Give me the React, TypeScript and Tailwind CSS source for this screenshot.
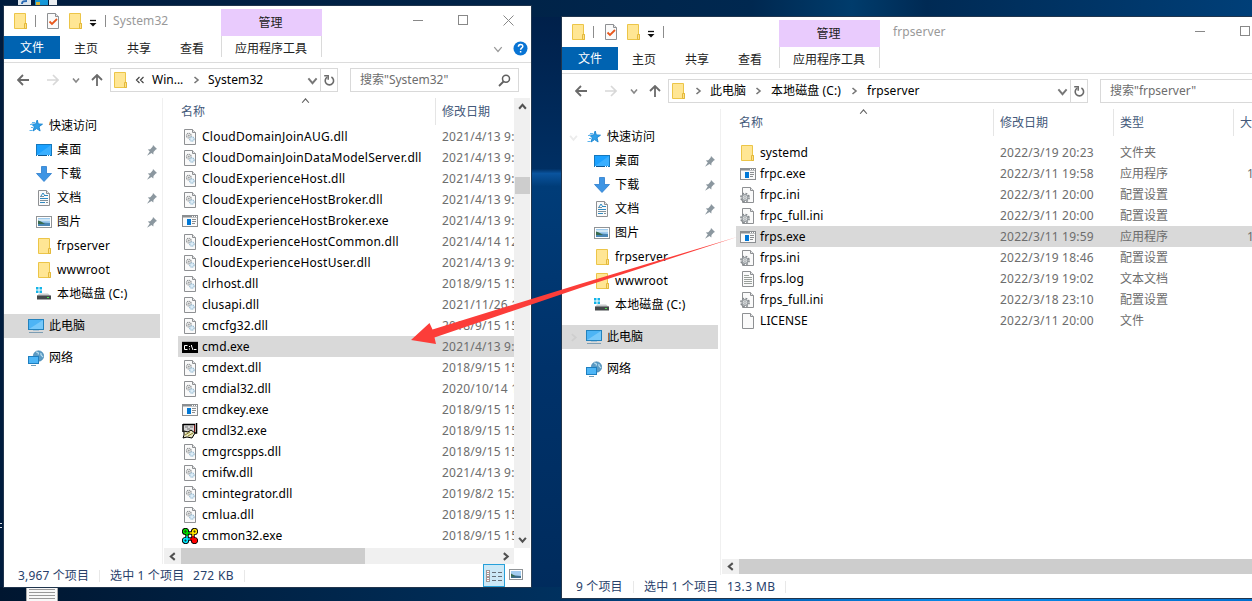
import React from 'react';

type IconKind = 'dll' | 'exe' | 'cmd' | 'dl32' | 'mon' | 'folder' | 'ini' | 'log' | 'file';

interface FileRow {
  name: string;
  date: string;
  icon: IconKind;
  type?: string;
  size?: string;
  selected?: boolean;
}

const SYSTEM_FILES: FileRow[] = [
  { name: 'CloudDomainJoinAUG.dll', date: '2021/4/13 9:', icon: 'dll' },
  { name: 'CloudDomainJoinDataModelServer.dll', date: '2021/4/13 9:', icon: 'dll' },
  { name: 'CloudExperienceHost.dll', date: '2021/4/13 9:', icon: 'dll' },
  { name: 'CloudExperienceHostBroker.dll', date: '2021/4/13 9:', icon: 'dll' },
  { name: 'CloudExperienceHostBroker.exe', date: '2021/4/13 9:', icon: 'exe' },
  { name: 'CloudExperienceHostCommon.dll', date: '2021/4/14 12', icon: 'dll' },
  { name: 'CloudExperienceHostUser.dll', date: '2021/4/13 9:', icon: 'dll' },
  { name: 'clrhost.dll', date: '2018/9/15 15', icon: 'dll' },
  { name: 'clusapi.dll', date: '2021/11/26 1', icon: 'dll' },
  { name: 'cmcfg32.dll', date: '2018/9/15 15', icon: 'dll' },
  { name: 'cmd.exe', date: '2021/4/13 9:', icon: 'cmd', selected: true },
  { name: 'cmdext.dll', date: '2018/9/15 15', icon: 'dll' },
  { name: 'cmdial32.dll', date: '2020/10/14 1', icon: 'dll' },
  { name: 'cmdkey.exe', date: '2018/9/15 15', icon: 'exe' },
  { name: 'cmdl32.exe', date: '2018/9/15 15', icon: 'dl32' },
  { name: 'cmgrcspps.dll', date: '2018/9/15 15', icon: 'dll' },
  { name: 'cmifw.dll', date: '2021/4/13 9:', icon: 'dll' },
  { name: 'cmintegrator.dll', date: '2019/8/2 15:', icon: 'dll' },
  { name: 'cmlua.dll', date: '2018/9/15 15', icon: 'dll' },
  { name: 'cmmon32.exe', date: '2018/9/15 15', icon: 'mon' },
];

const FRP_FILES: FileRow[] = [
  { name: 'systemd', date: '2022/3/19 20:23', icon: 'folder', type: '文件夹' },
  { name: 'frpc.exe', date: '2022/3/11 19:58', icon: 'exe', type: '应用程序', size: '1' },
  { name: 'frpc.ini', date: '2022/3/11 20:00', icon: 'ini', type: '配置设置' },
  { name: 'frpc_full.ini', date: '2022/3/11 20:00', icon: 'ini', type: '配置设置' },
  { name: 'frps.exe', date: '2022/3/11 19:59', icon: 'exe', type: '应用程序', size: '1', selected: true },
  { name: 'frps.ini', date: '2022/3/19 18:46', icon: 'ini', type: '配置设置' },
  { name: 'frps.log', date: '2022/3/19 19:02', icon: 'log', type: '文本文档' },
  { name: 'frps_full.ini', date: '2022/3/18 23:10', icon: 'ini', type: '配置设置' },
  { name: 'LICENSE', date: '2022/3/11 20:00', icon: 'file', type: '文件' },
];

const Svg = ({ children, w = 16, h = 16 }: { children: React.ReactNode; w?: number; h?: number }) => (
  <svg width={w} height={h} viewBox={`0 0 ${w} ${h}`} fill="none" className="block shrink-0">
    {children}
  </svg>
);

const FolderIcon = () => (
  <Svg>
    <path d="M1.5.5h11v10h1v5h-12z" fill="#ffe694" stroke="#ecc548" />
    <path d="M11.5 15.5v-5h2v5z" fill="#ffe089" stroke="#e3b93b" />
  </Svg>
);

const PageOutline = () => (
  <>
    <path d="M2.5.5h8l3 3v12h-11z" fill="#fafafa" stroke="#8e9093" />
    <path d="M10.5.5v3h3" fill="#e4e6e8" stroke="#8e9093" />
  </>
);

const FileIcon = ({ kind }: { kind: IconKind }) => {
  switch (kind) {
    case 'folder':
      return <FolderIcon />;
    case 'exe':
      return (
        <Svg>
          <rect x=".5" y="2.5" width="15" height="11" fill="#fafafa" stroke="#8b8e91" />
          <path d="M0 3h16v1.500H0z" fill="#8b8e91" />
          <path d="M10 3.5h1M12 3.5h1M14 3.5h1" stroke="#fff" />
          <path d="M5 6h4v6H5z" fill="#0078d7" />
          <path d="M10 6.5h4M10 8.5h4M10 10.5h3" stroke="#8a8d90" />
        </Svg>
      );
    case 'cmd':
      return (
        <Svg>
          <rect x=".5" y="2.5" width="15" height="11" fill="#000" stroke="#000" />
          <path d="M0 2.5h16" stroke="#b4b4b4" />
          <path d="M5.5 6.500H2.500v4h3M7.500 7v1M7.500 9.500v1M9.500 6v1l1.500 4M12 10.500h2.500" stroke="#fff" />
        </Svg>
      );
    case 'dl32':
      return (
        <Svg>
          <path d="M1 1h13v9H1z" fill="#d6d6d6" />
          <path d="M1 1.5h12M1 1v8M14.5 0v10h-4" stroke="#000" strokeWidth="1.5" />
          <path d="M12.5 2v7" stroke="#7a1010" />
          <path d="M3 4h3M8 4h3M5 6h3" stroke="#777" />
          <path d="M2 8l4 1 3-2 4 3-3 5-5-1-4 1 1-3z" fill="#e9e6c0" stroke="#000" />
          <path d="M3 12l5-3M6 13l5-3" stroke="#8a812c" />
        </Svg>
      );
    case 'mon':
      return (
        <Svg>
          <path d="M5 5h6v6H5z" stroke="#000" strokeWidth="3.5" />
          <g stroke="#000" strokeWidth="4">
            <circle cx="3.5" cy="3.5" r="1.6" />
            <circle cx="12.5" cy="3.5" r="1.6" />
            <circle cx="3.5" cy="12.5" r="1.6" />
            <circle cx="12.5" cy="12.5" r="1.6" />
          </g>
          <path d="M5 8V5h3" stroke="#00d800" strokeWidth="1.6" />
          <circle cx="3.5" cy="3.5" r="1.8" stroke="#00e000" strokeWidth="1.7" />
          <path d="M8 5h3v3" stroke="#ffe000" strokeWidth="1.6" />
          <circle cx="12.5" cy="3.5" r="1.8" stroke="#ffe600" strokeWidth="1.7" />
          <path d="M5 8v3h3" stroke="#00d8f0" strokeWidth="1.6" />
          <circle cx="3.5" cy="12.5" r="1.8" stroke="#00e8ff" strokeWidth="1.7" />
          <path d="M8 11h3V8" stroke="#f00" strokeWidth="1.6" />
          <circle cx="12.5" cy="12.5" r="1.8" fill="#f00" stroke="#f00" strokeWidth="1.7" />
        </Svg>
      );
    case 'ini':
      return (
        <Svg>
          <PageOutline />
          <circle cx="5" cy="10.5" r="4.1" stroke="#84898d" strokeWidth="1.6" strokeDasharray="1.8 1.42" />
          <circle cx="5" cy="10.5" r="2.9" fill="#dfe2e4" stroke="#969b9f" strokeWidth="1.2" />
          <circle cx="5" cy="10.5" r="1" fill="#fff" stroke="#8b9094" strokeWidth=".7" />
        </Svg>
      );
    case 'log':
      return (
        <Svg>
          <PageOutline />
          <path d="M4 4.5h5M4 6.5h8M4 8.5h8M4 10.5h8M4 12.5h8" stroke="#9aa09b" />
        </Svg>
      );
    case 'file':
      return (
        <Svg>
          <PageOutline />
        </Svg>
      );
    default:
      return (
        <Svg>
          <PageOutline />
          <circle cx="6.8" cy="6.6" r="2.4" fill="#e4e4e4" stroke="#8d9193" strokeWidth="1.1" strokeDasharray="1.1 .6" />
          <circle cx="6.8" cy="6.6" r=".9" fill="#9b9fa1" />
          <circle cx="9.900" cy="10" r="2.200" fill="#dcecf7" stroke="#8fb4cc" strokeWidth="1.1" strokeDasharray="1.1 .6" />
        </Svg>
      );
  }
};

const NavIcon = ({ kind }: { kind: string }) => (
  <Svg>
    {kind === 'star' && (
      <>
        <path d="M8.200 2l1.100 3.900 4.200.3-3.500 2.500 1.100 4.300-3.500-2.400L4 13l1.300-4.300L2.600 6.200l4.100-.3z" fill="#2f9fe8" stroke="#1683d0" strokeWidth=".9" />
        <path d="M3 4.500h3M1 6.500h3M2 9.500h2M.5 12.500h3" stroke="#5db4ee" strokeWidth="1" />
      </>
    )}
    {kind === 'desktop' && (
      <>
        <rect x=".5" y="2.5" width="15" height="11" fill="#1ba1ff" stroke="#1478bd" />
        <path d="M1 13L15 3v10z" fill="#3aafff" />
        <path d="M1 13.5h10" stroke="#0d5793" />
        <path d="M1 13.5h1M11 13.5h1M13 13.5h1" stroke="#fff" />
      </>
    )}
    {kind === 'download' && <path d="M5.5.5h5v7h5L8 15.5.5 7.5h5z" fill="#3e95e4" stroke="#2b7ccd" strokeWidth=".8" />}
    {kind === 'document' && (
      <>
        <PageOutline />
        <path d="M5 6l2-3 2 3M8 5.5h4M4 8.5h8M4 12.5h5" stroke="#2f8ac2" />
        <path d="M4 6.5h4M4 10.5h8M10 12.5h2" stroke="#809099" />
      </>
    )}
    {kind === 'picture' && (
      <>
        <rect x=".5" y="2.5" width="15" height="11" fill="#fff" stroke="#909497" />
        <path d="M2 4h12v8H2z" fill="#9fcbed" />
        <path d="M2 5h12v2H2z" fill="#cfe6f5" />
        <path d="M2 8l4 .5L14 9v3H2z" fill="#4a86b4" />
        <path d="M2 6.5l3 1 4 2.5H2z" fill="#386b4e" />
      </>
    )}
    {kind === 'disk' && (
      <>
        <path d="M0 1h2.500v2.500H0zM3.500 1H6v2.500H3.500zM0 4.500h2.500V7H0zM3.500 4.500H6V7H3.500z" fill="#12b4e8" />
        <path d="M3 7.500h9l3 2.500H1z" fill="#c9cccd" />
        <path d="M1 9.500h14v4H1z" fill="#44494b" />
        <path d="M11 11.500h2" stroke="#4ee44e" />
      </>
    )}
    {kind === 'pc' && (
      <>
        <rect x=".5" y="1.5" width="15" height="10" fill="#4db4f5" stroke="#2382bd" />
        <path d="M1 11L15 2v9z" fill="#76c8fa" />
        <path d="M5 12.5h6" stroke="#a9c4d5" />
        <path d="M1 14.5h14" stroke="#7c9db3" />
      </>
    )}
    {kind === 'network' && (
      <>
        <circle cx="10.5" cy="6" r="5.2" fill="#5b9bc4" stroke="#3a7dab" strokeWidth=".6" />
        <path d="M8 2c2 0 3 1 2 2.500M13 3c-1 2 1 3 2 4" stroke="#bde0f1" strokeWidth="1.200" />
        <rect x=".5" y="6.500" width="10" height="7" fill="#4db6f7" stroke="#1e7fc0" />
        <path d="M3 15.5h5" stroke="#6f9cb8" />
      </>
    )}
    {kind === 'folder' && (
      <>
        <path d="M2.5.5h11v10h1v5h-12z" fill="#ffe694" stroke="#ecc548" />
        <path d="M12.5 15.5v-5h2v5z" fill="#ffe089" stroke="#e3b93b" />
      </>
    )}
  </Svg>
);

const PinIcon = () => (
  <Svg w={10} h={11}>
    <path d="M6 0l4 4-1.2.6L6.500 7l-.2 2.500L4.500 8 0 10.800 2.800 6.500.8 4.600 3.300 4.200 5.700 1.500z" fill="#8b979f" />
  </Svg>
);

const Chevron = ({ dir, color = '#606060', size = 8, width = 1.6 }: { dir: 'up' | 'down' | 'left' | 'right'; color?: string; size?: number; width?: number }) => {
  const paths = { up: 'M1 6l3-3.500L7 6', down: 'M1 2.500L4 6l3-3.500', left: 'M6 1L2.500 4 6 7', right: 'M2.500 1L6 4 2.500 7' };
  return (
    <svg width={size} height={size} viewBox="0 0 8 8" fill="none" className="block shrink-0">
      <path d={paths[dir]} stroke={color} strokeWidth={width} />
    </svg>
  );
};

const NAV_ITEMS = [
  { label: '桌面', icon: 'desktop', pinned: true },
  { label: '下载', icon: 'download', pinned: true },
  { label: '文档', icon: 'document', pinned: true },
  { label: '图片', icon: 'picture', pinned: true },
  { label: 'frpserver', icon: 'folder' },
  { label: 'wwwroot', icon: 'folder' },
  { label: '本地磁盘 (C:)', icon: 'disk' },
];

const NavPane = ({ expanders }: { expanders?: boolean }) => (
  <nav className="w-[159px] shrink-0 border-r border-[#f0f0f0] pt-4 text-black">
    <div className="flex h-6 items-center">
      <span className="flex w-[25px] pl-[7px]">{expanders && <Chevron dir="down" color="#ececec" size={9} />}</span>
      <NavIcon kind="star" />
      <span className="ml-1">快速访问</span>
    </div>
    {NAV_ITEMS.map((item) => (
      <div key={item.label} className="flex h-6 items-center pl-8">
        <NavIcon kind={item.icon} />
        <span className="ml-[5px] flex-1 tracking-[0.15px]">{item.label}</span>
        {item.pinned && (
          <span className="mr-[5px]">
            <PinIcon />
          </span>
        )}
      </div>
    ))}
    <div className="mt-2 mr-0.5 flex h-6 items-center bg-[#d9d9d9]">
      <span className="flex w-6 pl-[7px]">{expanders && <Chevron dir="right" color="#cecece" size={9} />}</span>
      <NavIcon kind="pc" />
      <span className="ml-[5px]">此电脑</span>
    </div>
    <div className="mt-2 flex h-6 items-center pl-6">
      <NavIcon kind="network" />
      <span className="ml-[5px]">网络</span>
    </div>
  </nav>
);

const TitleBar = ({ title, titleAfter }: { title: string; titleAfter?: boolean }) => (
  <header className="flex h-[30px] pt-[3px]">
    <div className="flex w-[217px] items-center pb-[3px] pl-[9px]">
      <FolderIcon />
      <span className="ml-[6px] h-3 w-px bg-[#8c8c8c]" />
      <span className="ml-[9px]">
        <Svg>
          <PageOutline />
          <path d="M4.500 8.500l2.500 2.500L12 6" stroke="#e8571c" strokeWidth="1.800" />
        </Svg>
      </span>
      <span className="ml-[7px]"><FolderIcon /></span>
      <span className="ml-[5px] mt-[3px]">
        <Svg w={8} h={8}>
          <path d="M1 1.500h6" stroke="#111" strokeWidth="1.300" />
          <path d="M.5 4h7L4 7.500z" fill="#111" />
        </Svg>
      </span>
      <span className="ml-2 h-3 w-px bg-[#8c8c8c]" />
      {!titleAfter && <span className="ml-[7px] tracking-[0.1px] text-[#999]">{title}</span>}
    </div>
    <div className="flex h-[27px] w-[101px] items-center justify-center bg-[#e9cbfd] pr-0.5 text-[#222]">管理</div>
    {titleAfter && <span className="ml-[13px] flex h-6 items-center tracking-[0.1px] text-[#999]">{title}</span>}
    <div className="ml-auto flex h-[22px] items-center gap-[35px] pr-[17px]">
      <span className="h-px w-[10px] bg-[#888]" />
      <span className="h-[10px] w-[10px] border border-[#888]" />
      <Svg w={11} h={11}>
        <path d="M.5.500l10 10M10.500.500l-10 10" stroke="#888" />
      </Svg>
    </div>
  </header>
);

const RibbonTabs = () => (
  <div className="flex h-[27px] items-start border-b border-[#dcdcdc] text-[#222]">
    <div className="flex h-[23px] w-14 items-center justify-center bg-[#0063b1] pt-px text-white">文件</div>
    <div className="flex h-[26px] w-[53px] items-center justify-center pr-px">主页</div>
    <div className="flex h-[26px] w-[53px] items-center justify-center pr-px">共享</div>
    <div className="flex h-[26px] w-[53px] items-center justify-center pr-px">查看</div>
    <div className="ml-[2px] flex h-[21px] w-[101px] items-center justify-center border-x border-[#dadada] pt-[5px] pr-px">应用程序工具</div>
    <div className="ml-auto flex h-[25px] items-center gap-[10px] pr-[3px]">
      <Chevron dir="down" size={10} color="#999" width={1} />
      <Svg w={15} h={15}>
        <circle cx="7.500" cy="7.500" r="7" fill="#0874d4" />
        <path d="M5.400 5.800c0-3 4.400-3 4.400-.4 0 1.500-2.200 1.500-2.200 3.300M7.600 10v1.600" stroke="#fff" strokeWidth="1.500" />
      </Svg>
    </div>
  </div>
);

const AddressBar = ({ children, search, boxClass, searchClass }: { children: React.ReactNode; search: string; boxClass: string; searchClass: string }) => (
  <div className="flex h-[29px] items-end">
    <div className="flex h-6 w-[106px] items-center pl-[13px]">
      <Svg w={12} h={12}>
        <path d="M12 6H1M6 1L1 6l5 5" stroke="#6a6a6a" strokeWidth="1.800" />
      </Svg>
      <span className="ml-[18px]">
        <Svg w={12} h={12}>
          <path d="M0 6h11M6 1l5 5-5 5" stroke="#d8d8d8" strokeWidth="1.600" />
        </Svg>
      </span>
      <span className="ml-[13px]"><Chevron dir="down" color="#888" size={8} /></span>
      <span className="ml-[11px]">
        <Svg w={12} h={12}>
          <path d="M6 12V1M1 6l5-5 5 5" stroke="#6a6a6a" strokeWidth="1.800" />
        </Svg>
      </span>
    </div>
    <div className={`flex h-6 shrink-0 items-center border border-[#d9d9d9] pl-[2px] text-black ${boxClass}`}>
      <FolderIcon />
      {children}
      <span className="ml-auto mr-[2px]"><Chevron dir="down" color="#777" size={11} width={1.400} /></span>
      <span className="flex h-full w-[17px] items-center justify-center border-l border-[#d9d9d9]">
        <Svg w={12} h={12}>
          <path d="M4.200 3.100A4.200 4.200 0 1 0 8.400 3" stroke="#6a6a6a" strokeWidth="1.600" />
          <path d="M1.200 1.800h4v4" stroke="#6a6a6a" strokeWidth="1.500" />
        </Svg>
      </span>
    </div>
    <div className={`ml-3 flex h-6 shrink-0 items-center border border-[#d9d9d9] pl-[9px] text-[#6d6d6d] ${searchClass}`}>
      {search}
      <span className="ml-auto mr-[7px]">
        <Svg w={13} h={13}>
          <circle cx="8" cy="4.800" r="3.500" stroke="#606060" strokeWidth="1.500" />
          <path d="M5.500 7.500L1 12" stroke="#606060" strokeWidth="1.800" />
        </Svg>
      </span>
    </div>
  </div>
);

const FileList = ({ files, dateWidth }: { files: FileRow[]; dateWidth: string }) => (
  <div className="ml-[14px] text-[#6d6d6d]">
    {files.map((file) => (
      <div key={file.name} className={`flex h-[21px] items-center whitespace-nowrap ${file.selected ? 'bg-[#d9d9d9]' : ''}`}>
        <span className="ml-1"><FileIcon kind={file.icon} /></span>
        <span className={`ml-1 w-[240px] shrink-0 text-black ${file.name.length > 20 ? 'tracking-[0.25px]' : 'tracking-[0.1px]'}`}>{file.name}</span>
        <span className={`shrink-0 overflow-hidden tracking-[0.2px] ${dateWidth}`}>{file.date}</span>
        {file.type && <span className="w-[120px] shrink-0">{file.type}</span>}
        {file.size && <span className="ml-[7px]">{file.size}</span>}
      </div>
    ))}
  </div>
);

const SystemWindow = () => (
  <section className="absolute top-[6px] left-1 flex h-[581px] w-[527px] flex-col overflow-hidden bg-white shadow-[0_0_0_1px_#20354d]">
    <TitleBar title="System32" />
    <RibbonTabs />
    <AddressBar search={'搜索"System32"'} boxClass="w-[228px]" searchClass="w-[169px]">
      <span className="ml-[6px] flex w-[17px]">
        <Svg w={10} h={8}>
          <path d="M4.500 1l-3 3 3 3M8.500 1l-3 3 3 3" stroke="#444" strokeWidth="1.200" />
        </Svg>
      </span>
      <span className="w-10">Win...</span>
      <Chevron dir="right" color="#777" />
      <span className="ml-2 tracking-[0.1px]">System32</span>
    </AddressBar>
    <div className="flex h-[472px] pt-[6px]">
      <NavPane />
      <div className="flex min-w-0 flex-1 flex-col pl-px">
        <div className="flex h-[450px]">
          <div className="w-[350px] overflow-hidden">
            <div className="flex h-7 text-[#44597a]">
              <div className="relative flex h-[27px] w-[272px] items-center border-r border-[#e5e5e5] pl-[17px]">
                名称
                <span className="absolute -top-[2px] left-[137px]"><Chevron dir="up" size={9} width={1} /></span>
              </div>
              <div className="flex h-[27px] items-center pl-[6px]">修改日期</div>
            </div>
            <FileList files={SYSTEM_FILES} dateWidth="w-[72px]" />
          </div>
          <div className="flex w-4 flex-col items-center bg-[#f0f0f0] pt-1 pb-1">
            <Chevron dir="up" color="#505050" size={9} width={1.800} />
            <div className="mt-[66px] h-[17px] w-[15px] bg-[#cdcdcd]" />
            <span className="mt-auto"><Chevron dir="down" color="#505050" size={9} width={1.800} /></span>
          </div>
        </div>
        <div className="flex h-4 w-[350px] items-center bg-[#f0f0f0] pl-1">
          <Chevron dir="left" color="#505050" size={9} width={1.800} />
          <div className="ml-1 h-full w-[184px] bg-[#cdcdcd]" />
          <span className="mr-1 ml-auto"><Chevron dir="right" color="#505050" size={9} width={1.800} /></span>
        </div>
      </div>
    </div>
    <footer className="flex flex-1 items-center pl-[14px] tracking-[0.15px] text-[#28416b]">
      <span className="w-[81px]">3,967 个项目</span>
      <span className="h-3 w-px bg-[#e8e8e8]" />
      <span className="ml-[10px] w-[83px]">选中 1 个项目</span>
      <span className="w-[51px] tracking-[0.3px]">272 KB</span>
      <span className="h-3 w-px bg-[#e8e8e8]" />
      <span className="ml-auto flex h-full w-[22px] items-center justify-center border border-[#26a0da] bg-[#cce8f6]">
        <Svg>
          <rect x=".5" y="2.500" width="3" height="11" fill="#fff" stroke="#999" />
          <path d="M1 6.500h3M1 9.500h3" stroke="#999" />
          <path d="M2 4v1M2 8v1M2 11v1" stroke="#a02020" />
          <path d="M6 4.500h4M12 4.500h4M6 8.500h4M12 8.500h4M6 12.500h4M12 12.500h4" stroke="#666f78" />
        </Svg>
      </span>
      <span className="mr-[7px] mb-[2px] ml-[3px]">
        <svg width="14" height="14" viewBox="0 0 14 14" className="mx-px block">
          <rect x=".5" y="1.500" width="13" height="10" fill="#fff" stroke="#909497" />
          <path d="M2 3h10v7H2z" fill="#a4cdf0" />
          <path d="M2 7l4 .5 6 .5v2H2z" fill="#3e6f8e" />
          <path d="M2 5.500L7 8.500H2z" fill="#3a6d50" />
        </svg>
      </span>
    </footer>
  </section>
);

const FrpWindow = () => (
  <section className="absolute top-[17px] left-[562px] flex h-[581px] w-[751px] flex-col overflow-hidden bg-white shadow-[0_0_0_1px_#20354d]">
    <TitleBar title="frpserver" titleAfter />
    <RibbonTabs />
    <AddressBar search={'搜索"frpserver"'} boxClass="w-[420px]" searchClass="w-[205px]">
      <span className="ml-[7px]"><Chevron dir="right" color="#777" /></span>
      <span className="ml-2 w-11">此电脑</span>
      <Chevron dir="right" color="#777" />
      <span className="ml-[9px] w-[79px] tracking-[0.1px]">本地磁盘 (C:)</span>
      <Chevron dir="right" color="#777" />
      <span className="ml-[9px] tracking-[0.1px]">frpserver</span>
    </AddressBar>
    <div className="flex h-[472px] pt-[6px]">
      <NavPane expanders />
      <div className="flex min-w-0 flex-1 flex-col pl-px">
        <div className="h-[450px]">
          <div className="mb-[6px] flex h-[27px] text-[#44597a]">
            <div className="relative flex w-[272px] items-center border-r border-[#e5e5e5] pl-[17px]">
              名称
              <span className="absolute -top-[2px] left-[137px]"><Chevron dir="up" size={9} width={1} /></span>
            </div>
            <div className="flex w-[120px] items-center border-r border-[#e5e5e5] pl-[6px]">修改日期</div>
            <div className="flex w-[120px] items-center border-r border-[#e5e5e5] pl-[6px]">类型</div>
            <div className="flex items-center pl-[6px] whitespace-nowrap">大小</div>
          </div>
          <FileList files={FRP_FILES} dateWidth="w-[120px]" />
        </div>
        <div className="flex h-[15px] items-center bg-[#f0f0f0] pl-1">
          <Chevron dir="left" color="#505050" size={9} width={1.800} />
          <div className="ml-1 h-full flex-1 bg-[#cdcdcd]" />
        </div>
      </div>
    </div>
    <footer className="flex flex-1 items-center pl-[14px] tracking-[0.15px] text-[#28416b]">
      <span className="w-[57px]">9 个项目</span>
      <span className="h-3 w-px bg-[#e8e8e8]" />
      <span className="ml-[10px] w-[83px]">选中 1 个项目</span>
      <span className="w-[58px] tracking-[0.4px]">13.3 MB</span>
      <span className="h-3 w-px bg-[#e8e8e8]" />
    </footer>
  </section>
);

const Wallpaper = () => (
  <svg width="1252" height="601" className="absolute inset-0">
    <defs>
      <linearGradient id="top" x1="0" x2="1" y1="0" y2="0">
        <stop offset="0" stopColor="#001c3e" />
        <stop offset=".42" stopColor="#002348" />
        <stop offset=".6" stopColor="#002850" />
        <stop offset=".68" stopColor="#003c6c" />
        <stop offset=".74" stopColor="#002a54" />
        <stop offset="1" stopColor="#003f78" />
      </linearGradient>
      <linearGradient id="gap" x1="0" x2="0" y1="0" y2="1">
        <stop offset="0" stopColor="#00204a" />
        <stop offset=".26" stopColor="#002f63" />
        <stop offset=".268" stopColor="#0a549e" />
        <stop offset=".29" stopColor="#003c78" />
        <stop offset=".6" stopColor="#00326a" />
        <stop offset="1" stopColor="#002b5c" />
      </linearGradient>
      <linearGradient id="base" x1="0" x2="1" y1="0" y2="0">
        <stop offset="0" stopColor="#001630" />
        <stop offset=".45" stopColor="#00315f" />
        <stop offset=".6" stopColor="#0060b4" />
        <stop offset=".77" stopColor="#088cec" />
        <stop offset="1" stopColor="#0070cf" />
      </linearGradient>
    </defs>
    <rect width="1252" height="601" fill="url(#top)" />
    <rect x="531" y="17" width="32" height="584" fill="url(#gap)" />
    <rect y="587" width="1252" height="14" fill="url(#base)" />
    <path d="M18 0h13v5H18z" fill="#dce5ec" />
    <path d="M22 4c0-3 2-3 5-3" stroke="#2869b4" strokeWidth="2" fill="none" />
    <path d="M35 0h13v5H35z" fill="#1597d8" />
    <path d="M36 2h4v3h-4z" fill="#d3b53b" />
    <path d="M49 0h8v5h-8z" fill="#e9edf0" />
    <path d="M26.500 586.500h31V602h-31z" fill="#f8f8f8" stroke="#aaa" />
    <path d="M29 589.500h26M29 592.500h26M29 595.500h26M29 598.500h26" stroke="#999" />
    <path d="M0 523.500h2M0 527.500h2" stroke="#d8dee5" />
  </svg>
);

const App: React.FC = () => {
  return (
    <div className="relative h-[601px] w-[1252px] overflow-hidden bg-[#00244d] font-['Noto_Sans','Noto_Sans_CJK_SC',sans-serif] text-xs leading-4">
      <Wallpaper />
      <SystemWindow />
      <FrpWindow />
      <svg width="1252" height="601" className="pointer-events-none absolute inset-0">
        <path d="M411 340L429.500 323 432.500 329.500 580 284 737 237 580 288 434.500 337.500 436 344z" fill="#fc3d39" />
      </svg>
    </div>
  );
};

export default App;
